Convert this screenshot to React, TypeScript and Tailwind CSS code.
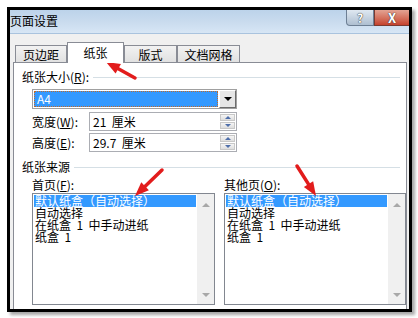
import React from "react";

const font = "font-['Noto_Sans_CJK_SC',sans-serif]";

function Tab({ label, active, width }: { label: string; active?: boolean; width: string }) {
  if (active) {
    return (
      <div className={`relative z-10 -mb-px flex h-[21px] ${width} justify-center border border-b-0 border-[#898c95] bg-white pt-[3px] text-[12px] leading-[14px] text-black`}>
        {label}
      </div>
    );
  }
  return (
    <div className={`mt-[3px] flex h-[17px] ${width} items-start justify-center border border-b-0 border-[#898c95] bg-gradient-to-b from-[#f2f2f2] to-[#e1e1e1] pt-[2px] text-[12px] leading-[13px] text-black`}>
      {label}
    </div>
  );
}

function Spin() {
  return (
    <div className="flex w-[15px] flex-col gap-px">
      <div className="flex h-[7px] items-center justify-center border border-[#c8c8c8] bg-gradient-to-b from-[#f5f5f5] to-[#dedede]">
        <div className="h-0 w-0 border-x-[3px] border-b-[3px] border-x-transparent border-b-[#4f6faa]" />
      </div>
      <div className="flex h-[7px] items-center justify-center border border-[#c8c8c8] bg-gradient-to-b from-[#f5f5f5] to-[#dedede]">
        <div className="h-0 w-0 border-x-[3px] border-t-[3px] border-x-transparent border-t-[#4f6faa]" />
      </div>
    </div>
  );
}

function SpinInput({ value }: { value: string }) {
  return (
    <div className="flex h-[19px] w-[148px] items-center justify-between border border-[#abadb3] bg-white pl-[3px] pr-px">
      <span className="whitespace-pre text-[12px] leading-[12px]">{value}</span>
      <Spin />
    </div>
  );
}

function ListBox({ width }: { width: string }) {
  const rows = ["自动选择", "在纸盒  1  中手动进纸", "纸盒  1"];
  return (
    <div className={`flex h-[112px] ${width} border border-[#828790] bg-white`}>
      <div className="flex flex-1 flex-col pt-px">
        <div className="mx-px h-[12px] bg-[#3399ff] pl-px text-[12px] leading-[12px] text-white whitespace-nowrap">
          默认纸盒（自动选择）
        </div>
        {rows.map((r) => (
          <div key={r} className="h-[12px] pl-[2px] text-[12px] leading-[12px] whitespace-pre">
            {r}
          </div>
        ))}
      </div>
      <div className="flex w-[17px] flex-col items-center justify-between bg-[#f0f0f0] pb-[7px] pt-[9px]">
        <div className="h-0 w-0 border-x-[4px] border-b-[4px] border-x-transparent border-b-[#a8a8a8]" />
        <div className="h-0 w-0 border-x-[4px] border-t-[4px] border-x-transparent border-t-[#a8a8a8]" />
      </div>
    </div>
  );
}

function GroupLabel({ children }: { children: React.ReactNode }) {
  return (
    <div className="flex items-center gap-[4px]">
      <span className="text-[12px] leading-[12px] whitespace-nowrap">{children}</span>
      <div className="h-px flex-1 bg-[#d5dfe5]" />
    </div>
  );
}

function Arrows() {
  const arrow = (x1: number, y1: number, x2: number, y2: number) => {
    const dx = x2 - x1;
    const dy = y2 - y1;
    const len = Math.hypot(dx, dy);
    const ux = dx / len;
    const uy = dy / len;
    const bx = x2 - ux * 14;
    const by = y2 - uy * 14;
    const px = -uy * 5.5;
    const py = ux * 5.5;
    return (
      <g>
        <line x1={x1} y1={y1} x2={bx + ux * 2} y2={by + uy * 2} stroke="#e21c1c" strokeWidth={3.5} strokeLinecap="round" />
        <polygon points={`${x2},${y2} ${bx + px},${by + py} ${bx - px},${by - py}`} fill="#e21c1c" />
      </g>
    );
  };
  return (
    <svg className="pointer-events-none absolute left-0 top-0" width={418} height={318}>
      {arrow(135, 78, 106, 62)}
      {arrow(162, 170, 135, 196)}
      {arrow(297, 166, 316, 196)}
    </svg>
  );
}

export default function App() {
  return (
    <div className={`relative h-[318px] w-[418px] bg-white pl-[7px] pt-[7px] ${font} text-black`}>
      <div className="flex h-[305px] w-[405px] flex-col border-[3px] border-black shadow-[3px_3px_3px_rgba(0,0,0,0.35)]">
        {/* title bar */}
        <div className="flex h-[24px] items-start justify-between border-b border-[#a9c3de] bg-gradient-to-b from-[#bcd3ea] via-[#c9dbee] to-[#d7e6f5]">
          <span className="pt-[4px] text-[12px] leading-[13px]">页面设置</span>
          <div className="flex">
            <div className="flex h-[16px] w-[28px] items-center justify-center rounded-bl-[4px] border border-t-0 border-[#6d7f94] bg-gradient-to-b from-[#dfe8f1] to-[#aebfd1] text-[12px] font-bold leading-[12px] text-white [text-shadow:0_0_1px_#333,0_0_1px_#333]">
              ?
            </div>
            <div className="flex h-[16px] w-[35px] items-center justify-center border border-t-0 border-r-0 border-[#7a3a30] bg-gradient-to-b from-[#e3a393] to-[#c4412d] text-[13px] font-bold leading-[12px] text-white [text-shadow:0_0_1px_#333,0_0_1px_#333]">
              X
            </div>
          </div>
        </div>
        {/* body */}
        <div className="flex flex-1 flex-col bg-[#f0f0f0] pl-[3px] pr-[2px] pt-[8px]">
          <div className="flex items-start pl-[2px]">
            <Tab label="页边距" width="w-[52px]" />
            <Tab label="纸张" width="w-[57px]" active />
            <Tab label="版式" width="w-[53px]" />
            <Tab label="文档网格" width="w-[63px]" />
          </div>
          <div className="flex-1 border-x border-t border-[#898c95] bg-white pl-[8px] pr-[6px] pt-[8px]">
            <GroupLabel>
              纸张大小(<u>R</u>):
            </GroupLabel>
            <div className="ml-[10px] mt-[6px] flex flex-col">
              <div className="flex h-[20px] w-[205px] border border-[#a0a0a0] bg-white">
                <div className="m-px flex flex-1 items-center border border-dotted border-[#c06a2a] bg-[#3399ff] pl-[2px] text-[12px] leading-[12px] text-white">
                  A4
                </div>
                <div className="flex w-[17px] items-center justify-center border border-b-[#6c6c6c] border-l-white border-r-[#6c6c6c] border-t-white bg-[#e6e6e6]">
                  <div className="h-0 w-0 border-x-[4px] border-t-[4px] border-x-transparent border-t-black" />
                </div>
              </div>
              <div className="mt-[3px] flex w-[205px] items-center justify-between">
                <span className="text-[12px] leading-[12px]">
                  宽度(<u>W</u>):
                </span>
                <SpinInput value="21  厘米" />
              </div>
              <div className="mt-[2px] flex w-[205px] items-center justify-between">
                <span className="text-[12px] leading-[12px]">
                  高度(<u>E</u>):
                </span>
                <SpinInput value="29.7  厘米" />
              </div>
            </div>
            <div className="mt-[9px]">
              <GroupLabel>纸张来源</GroupLabel>
            </div>
            <div className="ml-[10px] mt-[6px] flex gap-[9px]">
              <div className="flex flex-col gap-[2px]">
                <span className="text-[12px] leading-[12px]">
                  首页(<u>F</u>):
                </span>
                <ListBox width="w-[183px]" />
              </div>
              <div className="flex flex-col gap-[2px]">
                <span className="text-[12px] leading-[12px]">
                  其他页(<u>O</u>):
                </span>
                <ListBox width="w-[182px]" />
              </div>
            </div>
          </div>
        </div>
      </div>
      <Arrows />
    </div>
  );
}
